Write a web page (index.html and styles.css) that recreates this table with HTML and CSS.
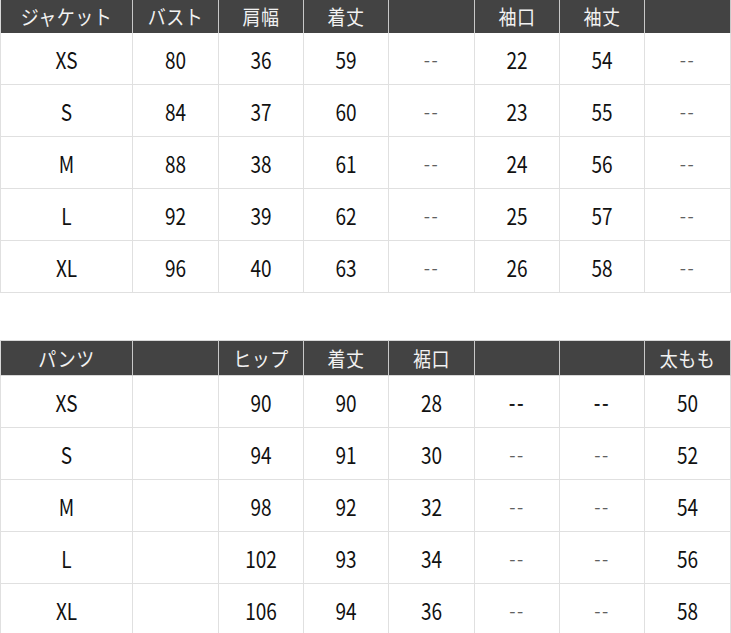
FILE: index.html
```html
<!DOCTYPE html>
<html lang="ja">
<head>
<meta charset="utf-8">
<title>サイズ表</title>
<link rel="stylesheet" href="styles.css">
</head>
<body>
<div class="sheet">
  <div class="tbl top">
    <div class="h"><span class="ht">ジャケット</span></div>
    <div class="h"><span class="ht">バスト</span></div>
    <div class="h"><span class="ht">肩幅</span></div>
    <div class="h"><span class="ht">着丈</span></div>
    <div class="h"></div>
    <div class="h"><span class="ht">袖口</span></div>
    <div class="h"><span class="ht">袖丈</span></div>
    <div class="h"></div>

    <div class="c"><span class="n">XS</span></div><div class="c"><span class="n">80</span></div><div class="c"><span class="n">36</span></div><div class="c"><span class="n">59</span></div><div class="c"><span class="d">--</span></div><div class="c"><span class="n">22</span></div><div class="c"><span class="n">54</span></div><div class="c"><span class="d">--</span></div>
    <div class="c"><span class="n">S</span></div><div class="c"><span class="n">84</span></div><div class="c"><span class="n">37</span></div><div class="c"><span class="n">60</span></div><div class="c"><span class="d">--</span></div><div class="c"><span class="n">23</span></div><div class="c"><span class="n">55</span></div><div class="c"><span class="d">--</span></div>
    <div class="c"><span class="n">M</span></div><div class="c"><span class="n">88</span></div><div class="c"><span class="n">38</span></div><div class="c"><span class="n">61</span></div><div class="c"><span class="d">--</span></div><div class="c"><span class="n">24</span></div><div class="c"><span class="n">56</span></div><div class="c"><span class="d">--</span></div>
    <div class="c"><span class="n">L</span></div><div class="c"><span class="n">92</span></div><div class="c"><span class="n">39</span></div><div class="c"><span class="n">62</span></div><div class="c"><span class="d">--</span></div><div class="c"><span class="n">25</span></div><div class="c"><span class="n">57</span></div><div class="c"><span class="d">--</span></div>
    <div class="c"><span class="n">XL</span></div><div class="c"><span class="n">96</span></div><div class="c"><span class="n">40</span></div><div class="c"><span class="n">63</span></div><div class="c"><span class="d">--</span></div><div class="c"><span class="n">26</span></div><div class="c"><span class="n">58</span></div><div class="c"><span class="d">--</span></div>
  </div>

  <div class="tbl bottom">
    <div class="h"><span class="ht">パンツ</span></div>
    <div class="h"></div>
    <div class="h"><span class="ht">ヒップ</span></div>
    <div class="h"><span class="ht">着丈</span></div>
    <div class="h"><span class="ht">裾口</span></div>
    <div class="h"></div>
    <div class="h"></div>
    <div class="h"><span class="ht">太もも</span></div>

    <div class="c"><span class="n">XS</span></div><div class="c"></div><div class="c"><span class="n">90</span></div><div class="c"><span class="n">90</span></div><div class="c"><span class="n">28</span></div><div class="c"><span class="d strong">--</span></div><div class="c"><span class="d strong">--</span></div><div class="c"><span class="n">50</span></div>
    <div class="c"><span class="n">S</span></div><div class="c"></div><div class="c"><span class="n">94</span></div><div class="c"><span class="n">91</span></div><div class="c"><span class="n">30</span></div><div class="c"><span class="d">--</span></div><div class="c"><span class="d">--</span></div><div class="c"><span class="n">52</span></div>
    <div class="c"><span class="n">M</span></div><div class="c"></div><div class="c"><span class="n">98</span></div><div class="c"><span class="n">92</span></div><div class="c"><span class="n">32</span></div><div class="c"><span class="d">--</span></div><div class="c"><span class="d">--</span></div><div class="c"><span class="n">54</span></div>
    <div class="c"><span class="n">L</span></div><div class="c"></div><div class="c"><span class="n">102</span></div><div class="c"><span class="n">93</span></div><div class="c"><span class="n">34</span></div><div class="c"><span class="d">--</span></div><div class="c"><span class="d">--</span></div><div class="c"><span class="n">56</span></div>
    <div class="c"><span class="n">XL</span></div><div class="c"></div><div class="c"><span class="n">106</span></div><div class="c"><span class="n">94</span></div><div class="c"><span class="n">36</span></div><div class="c"><span class="d">--</span></div><div class="c"><span class="d">--</span></div><div class="c"><span class="n">58</span></div>
  </div>
</div>
</body>
</html>
```

FILE: styles.css
```css
html, body {
  margin: 0;
  padding: 0;
  background: #ffffff;
}

body {
  font-family: "Noto Sans CJK JP", "Noto Sans", sans-serif;
  color: #111111;
  overflow: hidden;
}

.sheet {
  width: 731px;
  height: 633px;
  overflow: hidden;
}

.tbl {
  display: grid;
  grid-template-columns: 133px 86px 85px 85px 86px 85px 85px 86px;
  box-sizing: border-box;
}

.top {
  grid-template-rows: 33px repeat(5, 52px);
}

.bottom {
  margin-top: 47px;
  grid-template-rows: 36px repeat(5, 52px);
}

.h, .c {
  box-sizing: border-box;
  display: flex;
  align-items: center;
  justify-content: center;
  overflow: hidden;
}

.h {
  background: #434343;
  border-right: 1px solid #c8c8c8;
  color: #f2f2f2;
}

.h:first-child {
  border-left: 1px solid #d8d8d8;
}

.bottom .h {
  border-top: 1px solid #d8d8d8;
  border-bottom: 1px solid #d8d8d8;
}

.c {
  border-right: 1px solid #e0e0e0;
  border-bottom: 1px solid #e0e0e0;
}

.c:nth-child(8n+1) {
  border-left: 1px solid #e0e0e0;
}

.ht {
  display: inline-block;
  font-size: 18px;
  line-height: 1;
  transform: scaleY(1.12);
  letter-spacing: 0.5px;
}

.top .ht {
  margin-top: -1px;
}

.n {
  display: inline-block;
  font-size: 19px;
  line-height: 1;
  transform: scaleY(1.22);
  margin-top: -1px;
  color: #111111;
}

.d {
  display: inline-block;
  font-size: 18px;
  line-height: 1;
  color: #606060;
  letter-spacing: 1.5px;
  margin-top: 0;
}

.d.strong {
  color: #1a1a1a;
  font-weight: 700;
}
```
